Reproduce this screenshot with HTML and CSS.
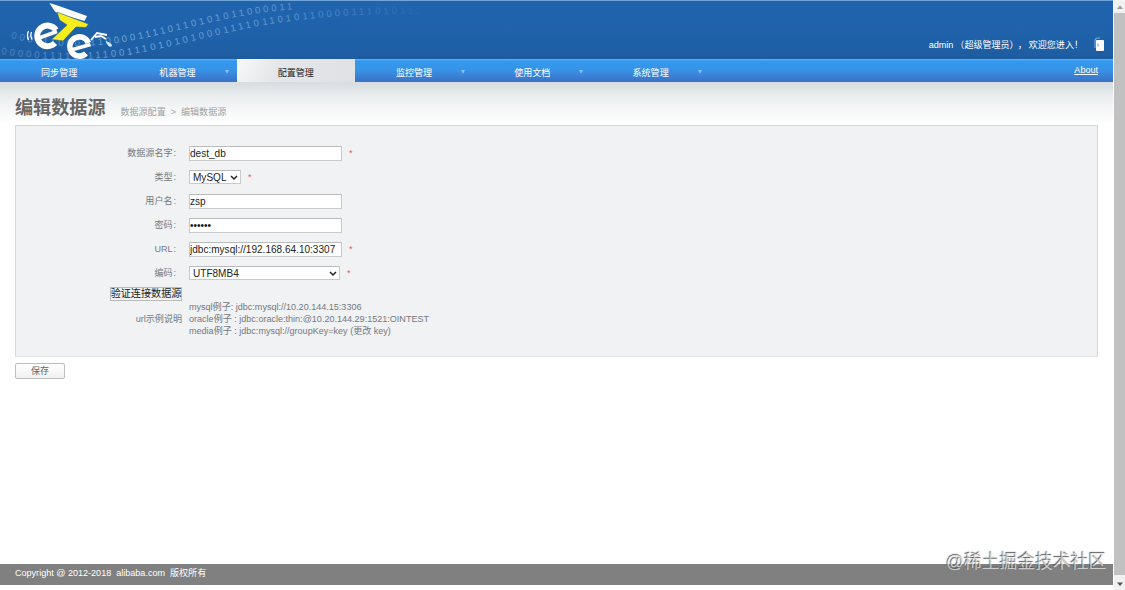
FILE: index.html
```html
<!DOCTYPE html>
<html lang="zh-CN">
<head>
<meta charset="utf-8">
<title>编辑数据源</title>
<link rel="stylesheet" href="styles.css">
</head>
<body>
<div class="window">
<div class="page">
  <header class="header">
    <svg class="banner" width="460" height="58" viewBox="0 1 460 58">
      <defs>
        <linearGradient id="fade" gradientUnits="userSpaceOnUse" x1="0" y1="0" x2="430" y2="0">
          <stop offset="0" stop-color="#7db4e4" stop-opacity=".4"/>
          <stop offset=".3" stop-color="#8fc2ec" stop-opacity=".7"/>
          <stop offset=".65" stop-color="#8fc0ea" stop-opacity=".55"/>
          <stop offset="1" stop-color="#8fc0ea" stop-opacity="0"/>
        </linearGradient>
        <path id="upper" d="M11 38C40 46 85 50 135 40S230 14 296 9"/>
        <path id="lower" d="M1 54C40 60 80 61 120 56S230 30 270 24S350 13 430 14"/>
      </defs>
      <g class="digits" fill="url(#fade)">
        <text><textPath href="#upper" textLength="286">000111000111000011110110101011000011</textPath></text>
        <text><textPath href="#lower" textLength="424">00000111111111001110101010001111011010110000111010111</textPath></text>
      </g>
      <path d="M49.5 3L59 6L87 16L84.5 21L57 13L54.5 11Z" fill="#fff"/>
      <g fill="none" stroke="#fff">
        <path d="M56 30A10.3 10.3 0 1 0 55 43" stroke-width="6"/>
        <path d="M39 38L57 31.5" stroke-width="3.6"/>
        <path d="M88.4 43A9.6 9.6 0 1 0 86 53.5" stroke-width="5.6"/>
        <path d="M71 50L90.5 44.5" stroke-width="3.6"/>
        <path d="M28.5 31Q26.5 35 28.5 40M31.5 32Q30 35 32 39.5" stroke-width="1.3"/>
        <path d="M91 40L97 33L107 35M95 37L101 36L106 39" stroke-width="1.8"/>
      </g>
      <path d="M57 12L88.5 24L86 27.5L76 27L63 41L51.5 39.5L67 25L59.5 20Z" fill="#f6ed1b" stroke="#225f9e" stroke-width=".6"/>
      <path d="M105.5 41Q112 43 112 46Q109 49 105.5 41Z" fill="#c9edff"/>
    </svg>
    <div class="user"><span>admin</span><span class="role">（超级管理员）</span><span class="welcome">，</span><span>欢迎您进入！</span>
      <svg class="exit" width="11" height="15" viewBox="0 0 11 15"><path d="M1 11V4Q1 1 4 1H6" fill="none" stroke="#6eaae5" stroke-width="1.2"/><rect x="2" y="3" width="8" height="11" rx="1" fill="#fff"/><path d="M3 6L6 8L3 10" fill="#b7cbe4"/></svg>
    </div>
  </header>
  <nav class="nav">
    <a class="tab">同步管理</a>
    <a class="tab menu">机器管理</a>
    <a class="tab active">配置管理</a>
    <a class="tab menu">监控管理</a>
    <a class="tab menu">使用文档</a>
    <a class="tab menu">系统管理</a>
    <a class="about">About</a>
  </nav>
  <main class="main">
    <div class="heading"><h1>编辑数据源</h1><div class="crumbs"><span>数据源配置</span><span>&gt;</span><span>编辑数据源</span></div></div>
    <form class="panel">
      <div class="row"><label>数据源名字<i>:</i></label><input class="field" type="text" value="dest_db"><b>*</b></div>
      <div class="row"><label>类型<i>:</i></label><div class="select short"><span>MySQL</span><svg width="8" height="6" viewBox="0 0 8 6"><path d="M1 1L4 4L7 1"/></svg></div><b>*</b></div>
      <div class="row"><label>用户名<i>:</i></label><input class="field" type="text" value="zsp"></div>
      <div class="row"><label>密码<i>:</i></label><input class="field secret" type="password" value="123456"></div>
      <div class="row"><label>URL<i>:</i></label><input class="field" type="text" value="jdbc:mysql://192.168.64.10:3307"><b>*</b></div>
      <div class="row"><label>编码<i>:</i></label><div class="select long"><span>UTF8MB4</span><svg width="8" height="6" viewBox="0 0 8 6"><path d="M1 1L4 4L7 1"/></svg></div><b>*</b></div>
      <div class="verify"><button type="button">验证连接数据源</button></div>
      <div class="examples"><span class="caption">url示例说明</span>
        <div><p>mysql例子: jdbc:mysql://10.20.144.15:3306</p><p>oracle例子 : jdbc:oracle:thin:@10.20.144.29:1521:OINTEST</p><p>media例子 : jdbc:mysql://groupKey=key (更改 key)</p></div>
      </div>
    </form>
    <button class="save" type="button">保存</button>
  </main>
  <footer class="footer"><span>Copyright @ 2012-2018&nbsp; alibaba.com&nbsp; 版权所有</span></footer>
</div>
<aside class="scrollbar">
  <svg width="12" height="13" viewBox="0 0 12 13"><path d="M3 9L6 5.5L9 9Z" fill="#999"/></svg>
  <div class="thumb"></div>
  <svg width="12" height="13" viewBox="0 0 12 13"><path d="M3 5.5L6 9L9 5.5Z" fill="#505050"/></svg>
</aside>
<div class="watermark">@稀土掘金技术社区</div>
</div>
</body>
</html>
```
FILE: styles.css
```css
* { box-sizing: border-box; }
body { margin: 0; background: #fff; font: 9.05px/12px "Liberation Sans", "Noto Sans CJK SC", sans-serif; color: #75797f; overflow: hidden; }
.window { position: relative; display: flex; width: 1125px; height: 590px; }
.page { display: flex; flex-direction: column; width: 1113px; height: 585px; }
.header { display: flex; justify-content: space-between; height: 59px; border-top: 1px solid #70a4da; background: linear-gradient(#2064ae, #1f62aa 60%, #1e5ca0); }
.banner { display: block; }
.digits { font: 9.5px "Liberation Sans", sans-serif; }
.user { display: flex; align-items: center; height: 16px; margin: 36px 8px 0 0; color: #fff; white-space: nowrap; }
.role { margin-left: 2px; }
.welcome { margin-left: -1px; margin-right: 2px; }
.exit { margin: -2px 0 0 11px; }
.nav { display: flex; height: 23px; background: linear-gradient(#65b3f5, #329aef 2px, #3892e6 11px, #3a76cb 21px, #3f72bb); color: #fff; }
.tab { position: relative; width: 118.3px; padding-top: 8px; text-align: center; }
.menu::after { content: ""; position: absolute; right: 8px; top: 11px; border: 2.5px solid transparent; border-top: 4px solid #83c1f6; border-bottom: 0; }
.active { color: #222; background: linear-gradient(115deg, #f8f8f9, #e5e6e9 35%, #dfe1e5); }
.about { margin-left: auto; padding: 5px 15px 0 0; text-decoration: underline; }
.main { flex: 1; padding: 0 15px; background: linear-gradient(#d7dce0, #edf0f1 17px, #fff 42px); }
.heading { display: flex; height: 43px; padding-top: 14px; }
h1 { margin: 0; font-size: 18.1px; line-height: 24px; color: #666; }
.crumbs { display: flex; gap: 5px; margin: 10px 0 0 15px; color: #a2a2a2; }
.panel { height: 232px; padding-top: 15px; border: 1px solid #d6d8da; border-bottom-color: #e0e2e4; background: #f0f2f4; }
.row { display: flex; align-items: center; height: 24px; }
label { width: 160px; margin-right: 13px; text-align: right; }
i { font-style: normal; margin-left: 1px; }
.field, .select { font: 10.05px/12px "Liberation Sans", sans-serif; color: #222; background: #fff; border: 1px solid #c7c9cb; border-top-color: #b9bbbd; }
.field { width: 153px; height: 15px; padding: 0; outline: 0; }
.secret { font-size: 10px; color: #111; }
b { margin-left: 7px; color: #ee5353; font-weight: normal; }
.select { display: flex; align-items: center; justify-content: space-between; height: 14px; padding: 1px 2px 0 3px; }
.select svg { fill: none; stroke: #222; stroke-width: 1.5; }
.short { width: 52px; }
.long { width: 151px; }
.verify { width: 166px; height: 14px; margin-top: 2px; display: flex; justify-content: flex-end; }
.verify button { width: 72px; height: 14px; padding: 0; border: 1px solid #b9bbbd; background: #f1f2f3; color: #222; font: 10.1px/12px "Liberation Sans", "Noto Sans CJK SC", sans-serif; white-space: nowrap; display: flex; justify-content: center; }
.examples { display: flex; align-items: center; }
.caption { width: 166px; margin: 0 7px 0 0; text-align: right; }
p { margin: 0; line-height: 12.2px; white-space: nowrap; }
.save { display: block; width: 50px; height: 16px; margin-top: 6px; padding: 0; border: 1px solid #bdbdbd; border-radius: 2px; background: linear-gradient(#fff, #f1f1f1); color: #666; font: 9px/12px "Liberation Sans", "Noto Sans CJK SC", sans-serif; }
.footer { display: flex; align-items: center; height: 21px; padding: 0 15px 3px; background: #808080; color: #fff; }
.scrollbar { display: flex; flex-direction: column; width: 12px; border-left: 1px solid #fff; background: #f1f1f1; }
.thumb { flex: 1; margin-bottom: 2px; background: #c1c1c1; }
.watermark { position: absolute; left: 946px; top: 550px; font: 17.8px/24px "Liberation Sans", "Noto Sans CJK SC", sans-serif; color: rgba(255, 255, 255, .65); text-shadow: -.7px -.7px 1px #555; white-space: nowrap; }
```
